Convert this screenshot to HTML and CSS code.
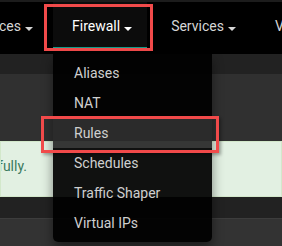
FILE: index.html
```html
<!DOCTYPE html>
<html lang="en">
<head>
    <meta charset="UTF-8">
    <meta name="viewport" content="width=device-width, initial-scale=1.0">
    <title>Firewall menu</title>

    <link rel="stylesheet" href="styles.css">
</head>
<body>

<nav class="navbar">
    <ul class="nav">
        <li class="nav-item nav-cut"><a href="#">Interfaces<span class="caret"></span></a></li>
        <li class="nav-item active">
            <a href="#">Firewall<span class="caret"></span></a>
            <!-- открытое меню -->
            <ul class="dropdown">
                <li><a href="#">Aliases</a></li>
                <li><a href="#">NAT</a></li>
                <li class="selected"><a href="#">Rules</a></li>
                <li><a href="#">Schedules</a></li>
                <li><a href="#">Traffic Shaper</a></li>
                <li><a href="#">Virtual IPs</a></li>
            </ul>
        </li>
        <li class="nav-item"><a href="#">Services<span class="caret"></span></a></li>
        <li class="nav-item nav-last"><a href="#">VPN<span class="caret"></span></a></li>
    </ul>
</nav>

<div class="page">
    <div class="page-bar"></div>
    <div class="panel"></div>
    <div class="alert">
        <div class="alert-text"><span>The changes have been applied successfully.</span></div>
    </div>
    <div class="gap"></div>
    <div class="panel-foot"></div>
</div>

</body>
</html>
```

FILE: styles.css
```css
body {
    font-family: Roboto, "Liberation Sans", sans-serif;
    font-size: 14px;
    background-color: #303030;
    margin: 0;
    padding: 0;
    width: 282px;
    height: 246px;
    overflow: hidden;
}

a {
    text-decoration: none;
}

.navbar {
    background-color: #000;
    border-top: 2px solid #1c1c1c;
    height: 52px;
    position: relative;
    z-index: 2;
}

.nav {
    display: flex;
    gap: 5px;
    height: 52px;
    margin: 0;
    padding: 0;
    list-style: none;
}

.nav-item {
    position: relative;
    flex: none;
}

.nav-item > a {
    display: block;
    padding: 4px 15px 0 19px;
    line-height: 41px;
    color: #d6d6d6;
    white-space: nowrap;
    border-bottom: 2px solid transparent;
}

/* пункты обрезаны краем скриншота */
.nav-cut {
    width: 48px;
    overflow: hidden;
    display: flex;
    justify-content: flex-end;
}

.nav-cut > a {
    flex: none;
    align-self: flex-start;
}

.nav-last {
    flex: 1;
    min-width: 0;
    overflow: hidden;
}

.caret {
    display: inline-block;
    width: 0;
    height: 0;
    margin-left: 4px;
    border-top: 4px solid;
    border-left: 4px solid transparent;
    border-right: 4px solid transparent;
}

.active > a {
    position: relative;
    background-color: #0c0c0c;
    color: #fff;
    border-bottom-color: #149a88;
}

.active > a::after {
    content: "";
    position: absolute;
    top: 2px;
    bottom: -4px;
    left: -9px;
    right: -6px;
    border: 3px solid #f14a4a;
}

.dropdown {
    position: absolute;
    top: 100%;
    left: 0;
    width: 159px;
    margin: 0;
    padding: 4px 0;
    list-style: none;
    background-color: rgba(0, 0, 0, 0.93);
    border-radius: 0 0 5px 5px;
    box-shadow: 0 6px 12px rgba(0, 0, 0, 0.45);
}

.dropdown a {
    display: block;
    padding: 0 21px;
    line-height: 30px;
    color: #cfcfcf;
    white-space: nowrap;
}

.dropdown .selected {
    position: relative;
    background-color: rgba(255, 255, 255, 0.16);
}

.dropdown .selected::after {
    content: "";
    position: absolute;
    top: -2px;
    bottom: -5px;
    left: -12px;
    right: -7px;
    border: 3px solid #f14a4a;
    box-shadow: 2px 2px 3px rgba(0, 0, 0, 0.3);
}

.page-bar {
    height: 20px;
    background-color: #222;
}

.panel {
    height: 67px;
    background-color: #303030;
}

.alert {
    height: 56px;
    box-sizing: border-box;
    padding-top: 14px;
    background-color: #e2f0e2;
    border: 1px solid #d3e8cb;
    color: #3b7a5e;
    line-height: 20px;
    overflow: hidden;
}

.alert-text {
    width: 26px;
    display: flex;
    justify-content: flex-end;
    white-space: nowrap;
}

.alert-text span {
    flex: none;
}

.gap {
    height: 21px;
    background-color: #222;
}

.panel-foot {
    height: 27px;
    background-color: #333;
    border-top: 1px solid #3d3d3d;
}
```
